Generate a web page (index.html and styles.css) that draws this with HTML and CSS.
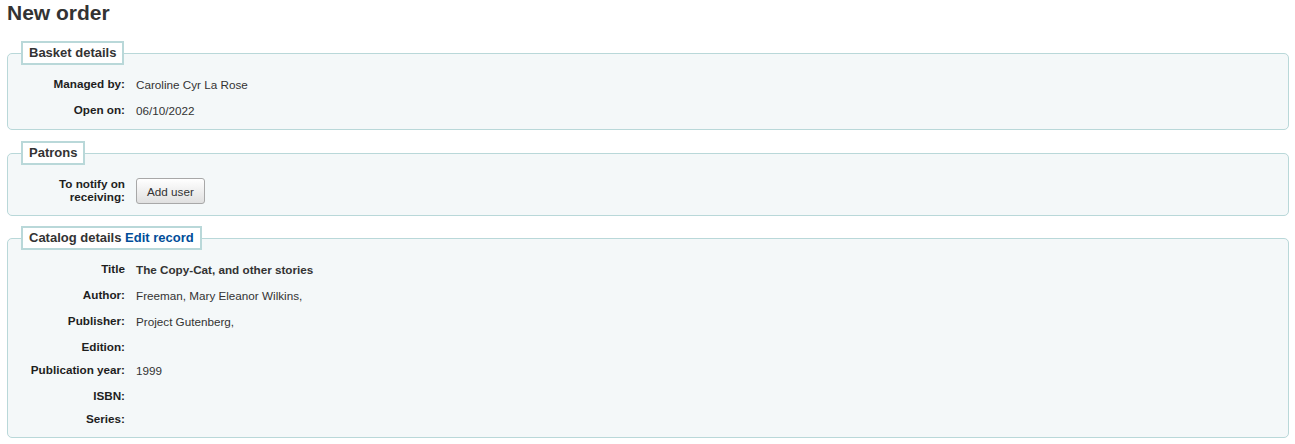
FILE: index.html
```html
<!DOCTYPE html>
<html lang="en">
<head>
<meta charset="utf-8">
<title>New order</title>
<link rel="stylesheet" href="styles.css">
</head>
<body>
<main class="page">
  <h1 class="title">New order</h1>

  <fieldset class="rows">
    <legend>Basket details</legend>
    <ol>
      <li><span class="label">Managed by:</span><span class="value">Caroline Cyr La Rose</span></li>
      <li><span class="label">Open on:</span><span class="value">06/10/2022</span></li>
    </ol>
  </fieldset>

  <fieldset class="rows rows-patrons">
    <legend>Patrons</legend>
    <ol>
      <li class="patrons"><span class="label">To notify on receiving:</span><span class="value"><button class="btn" type="button">Add user</button></span></li>
    </ol>
  </fieldset>

  <fieldset class="rows rows-last">
    <legend>Catalog details <a class="link" href="#">Edit record</a></legend>
    <ol>
      <li><span class="label">Title</span><span class="value strong">The Copy-Cat, and other stories</span></li>
      <li><span class="label">Author:</span><span class="value">Freeman, Mary Eleanor Wilkins,</span></li>
      <li><span class="label">Publisher:</span><span class="value">Project Gutenberg,</span></li>
      <li><span class="label">Edition:</span></li>
      <li><span class="label">Publication year:</span><span class="value">1999</span></li>
      <li><span class="label">ISBN:</span></li>
      <li><span class="label">Series:</span></li>
    </ol>
  </fieldset>
</main>
</body>
</html>
```
FILE: styles.css
```css
* { box-sizing: border-box; }

body {
  margin: 0;
  background: #ffffff;
  font-family: "Liberation Sans", Arial, sans-serif;
  font-size: 11.7px;
  color: #333333;
}

.page {
  padding: 0 6px 0 7px;
}

.title {
  margin: 0 0 16px;
  padding-top: 1px;
  font-size: 21px;
  line-height: 24px;
  font-weight: bold;
  color: #333333;
}

.rows {
  margin: 0 0 11px;
  padding: 7px 13px 5px;
  background: #f4f8f9;
  border: 1px solid #b9d8d9;
  border-radius: 5px;
  min-width: 0;
}

.rows-patrons {
  margin-bottom: 10px;
}

.rows-last {
  padding-bottom: 7px;
}

.rows legend {
  padding: 3px 6px;
  background: #ffffff;
  border: 2px solid #b9d8d9;
  font-size: 13px;
  line-height: 14px;
  font-weight: bold;
  color: #333333;
}

.link {
  color: #004d99;
  text-decoration: none;
}

.rows ol {
  list-style: none;
  margin: 0;
  padding: 0;
}

.rows li {
  display: flex;
  align-items: flex-start;
  gap: 11px;
  padding: 4px 0;
}

.rows li.patrons {
  padding: 5px 0 6px;
}

.label {
  flex: 0 0 104px;
  text-align: right;
  font-weight: bold;
  line-height: 15px;
  color: #1e1e1e;
}

.patrons .label {
  line-height: 13px;
}

.value {
  line-height: 18px;
  color: #333333;
}

.strong {
  font-weight: bold;
}

.btn {
  display: block;
  margin-top: 1px;
  height: 26px;
  padding: 0 10px;
  font-family: "Liberation Sans", Arial, sans-serif;
  font-size: 11.7px;
  color: #333333;
  background: linear-gradient(to bottom, #ffffff 0%, #e0e0e0 100%);
  border: 1px solid #a8a8a8;
  border-radius: 3px;
}
```
